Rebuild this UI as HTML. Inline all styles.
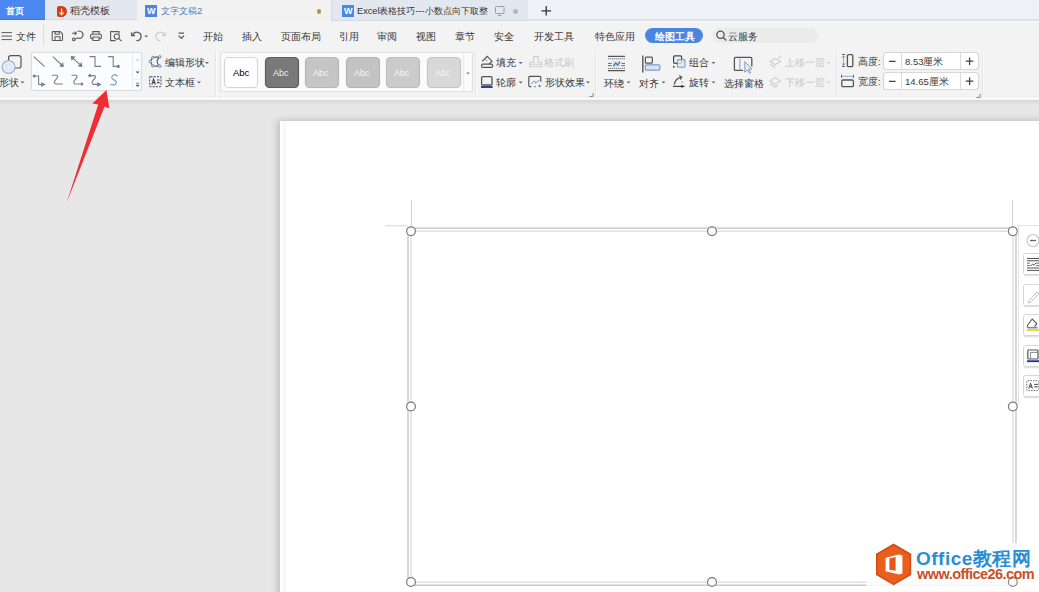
<!DOCTYPE html>
<html><head><meta charset="utf-8">
<style>
*{margin:0;padding:0;box-sizing:border-box}
html,body{width:1039px;height:592px;overflow:hidden;background:#e7e7e7;font-family:"Liberation Sans",sans-serif;color:#333}
.a{position:absolute}
.t{position:absolute;font-size:9.5px;line-height:12px;white-space:nowrap;color:#363636}
svg{position:absolute;overflow:visible}
</style></head><body>
<!-- tab bar -->
<div class="a" style="left:0;top:0;width:1039px;height:22px;background:#f2f2f2"></div>
<div class="a" style="left:528px;top:0;width:511px;height:20px;background:#eef1f5"></div>
<div class="a" style="left:528px;top:19px;width:511px;height:2px;background:#dfe2e7"></div><div class="a" style="left:528px;top:21px;width:511px;height:1px;background:#fafafa"></div>
<div class="a" style="left:0;top:0;width:45px;height:20px;background:#4a88f0;border-bottom:1px solid #4173d0"></div>
<div class="a" style="left:0;top:20px;width:44px;height:2px;background:#eef5fa"></div><div class="t" style="left:6px;top:5px;color:#fff;font-size:9.2px;font-weight:bold">首页</div>
<div class="a" style="left:45px;top:0;width:92px;height:20px;background:#e3e7ef;border-bottom:1px solid #d5d9e0"></div>
<div class="a" style="left:56.5px;top:6px;width:10.5px;height:11px;background:#cf4019;border-radius:2px 5.5px 5.5px 2px"></div><svg width="20" height="20" style="left:56px;top:6px" fill="none"><path d="M5.6 2.6v5.6M3.4 6.4l2.2 2.4 2.2-2.4" stroke="#ffd9b0" stroke-width="1.3"/></svg>
<div class="t" style="left:70px;top:5px;color:#333">稻壳模板</div>
<div class="a" style="left:145px;top:5px;width:12px;height:12px;background:#4a88e4"></div>
<div class="t" style="left:147px;top:5px;color:#fff;font-size:9px;font-weight:bold">W</div>
<div class="t" style="left:161px;top:5px;color:#4a7ac0;font-size:9.4px">文字文稿2</div>
<div class="a" style="left:316.5px;top:9px;width:4.5px;height:4.5px;border-radius:50%;background:#ad9270;box-shadow:0 0 2px 2px #fbf1dc"></div>
<div class="a" style="left:331px;top:0;width:197px;height:21px;background:#e3e7ef;border-left:1px solid #d8dce4;border-bottom:1px solid #d5d9e0"></div>
<div class="a" style="left:342px;top:5px;width:12px;height:12px;background:#4a88e4"></div>
<div class="t" style="left:344px;top:5px;color:#fff;font-size:9px;font-weight:bold">W</div>
<div class="t" style="left:357px;top:5px;color:#333;font-size:9.2px">Excel表格技巧---小数点向下取整</div>
<svg width="20" height="20" style="left:494px;top:4px" fill="none"><rect x="1.5" y="2.5" width="8.5" height="7" rx="1" stroke="#9a9a9a" stroke-width="1"/><path d="M4 11.5h3.5" stroke="#9a9a9a"/></svg><div class="a" style="left:513px;top:9px;width:5px;height:5px;border-radius:50%;background:#b8b8b8"></div>
<svg width="1039" height="22" style="left:0;top:0" fill="none"><path d="M541.4 10.8h9.6M546.2 6v9.6" stroke="#333" stroke-width="1.3"/></svg>

<!-- menu bar -->
<div class="a" style="left:0;top:22px;width:1039px;height:26px;background:#f3f3f3"></div>
<div class="t" style="left:16px;top:31px">文件</div>
<div class="a" style="left:43px;top:25px;width:1px;height:21px;background:#dcdcdc"></div>
<div class="t" style="left:203px;top:31px">开始</div>
<div class="t" style="left:242px;top:31px">插入</div>
<div class="t" style="left:281px;top:31px">页面布局</div>
<div class="t" style="left:339px;top:31px">引用</div>
<div class="t" style="left:377px;top:31px">审阅</div>
<div class="t" style="left:416px;top:31px">视图</div>
<div class="t" style="left:455px;top:31px">章节</div>
<div class="t" style="left:494px;top:31px">安全</div>
<div class="t" style="left:534px;top:31px">开发工具</div>
<div class="t" style="left:595px;top:31px">特色应用</div>
<div class="a" style="left:645px;top:28px;width:58px;height:15px;border-radius:8px;background:#4a85e0"></div>
<div class="t" style="left:655px;top:31px;color:#fff;font-weight:bold">绘图工具</div>
<div class="a" style="left:712px;top:28px;width:106px;height:15px;border-radius:8px;background:#ebebeb"></div>
<div class="t" style="left:728px;top:31px">云服务</div>


<!-- menu icons -->
<svg width="1039" height="110" style="left:0;top:0" fill="none" stroke="#5c5c5c" stroke-width="1.1">
<path d="M1.5 32.6H12M1.5 36.1H12M1.5 39.6H12" stroke-width="1"/>
<path d="M53 31.6h7.2l2.3 2.3v5.8c0 .5-.3.8-.8.8h-8.7c-.5 0-.8-.3-.8-.8v-7.3c0-.5.3-.8.8-.8z"/>
<path d="M55 40.3v-3.6h5v3.6M55.2 31.8v2.4h4v-2.4"/>
<path d="M72 33.3h4.2M74.6 31.7l1.8 1.6-1.8 1.6"/>
<path d="M77.5 31.6a3.6 3.6 0 1 1 0 6.2l-2.6 1.6"/>
<circle cx="73.8" cy="39.4" r="1.3"/>
<path d="M92.8 34.3v-2.7h6.4v2.7M92.6 38.6h-1c-.6 0-1-.4-1-1v-2.3c0-.6.4-1 1-1h8.8c.6 0 1 .4 1 1v2.3c0 .6-.4 1-1 1h-1M93 37v3.5h6V37z"/>
<path d="M119 34.3v-2.7h-8.4v9h5"/>
<circle cx="116.8" cy="36.6" r="2.6"/>
<path d="M118.8 38.6l2.8 2.6"/>
<path d="M132.8 35.2a4.2 4.2 0 1 1 3.6 5.4" stroke-width="1.3"/>
<path d="M131.6 32.3v3.4h3.4" stroke-width="1.3"/>
<path d="M144.2 35.6h4l-2 2z" fill="#666" stroke="none"/>
<path d="M164.2 35.2a4.2 4.2 0 1 0-3.6 5.4M165.4 32.3v3.4h-3.4" stroke="#cfcfcf" stroke-width="1.3"/>
<path d="M178.6 33.2h5.4M178.6 35.6l2.7 2.8 2.7-2.8" stroke-width="1.3"/>
<circle cx="720.5" cy="34.8" r="3.6" stroke="#555" stroke-width="1.3"/>
<path d="M723.2 37.5l3 3" stroke-width="1.4"/>
</svg>

<!-- ribbon -->
<div class="a" style="left:0;top:48px;width:1039px;height:52px;background:#f3f3f3"></div>
<div class="a" style="left:0;top:96px;width:1039px;height:1px;background:#ebebeb"></div><div class="a" style="left:0;top:97px;width:1039px;height:3px;background:#f8f8f8"></div><div class="a" style="left:0;top:100px;width:1039px;height:5px;background:linear-gradient(#d6d6d6,#e7e7e7)"></div>


<!-- ribbon content -->
<svg width="1039" height="110" style="left:0;top:0" fill="none" stroke="#555" stroke-width="1.2">
<!-- shape -->
<rect x="8.6" y="55.6" width="12.4" height="12.4" rx="2.2" stroke="#555" stroke-width="1.2"/>
<circle cx="8.6" cy="67" r="6.4" fill="#e8edf8" stroke="#9fb0d4" stroke-width="1.2"/><circle cx="8.6" cy="67" r="3" fill="none" stroke="#d4ddef" stroke-width="1"/>
<path d="M20.5 81.5h4l-2 2z" fill="#666" stroke="none"/>
<!-- gallery -->
<rect x="31.5" y="52.5" width="110" height="38" rx="2" fill="#fbfcfd" stroke="#dcdcdc"/>
<g stroke="#75818e" stroke-width="1.1" fill="#75818e">
<path d="M33.8 56.6L44.6 66.6" fill="none"/>
<path d="M52.8 56.6L61.8 65" fill="none"/><path d="M63.2 66.4l-3-.5 2.5-2.5z"/>
<path d="M72.6 57.8L80.6 65.2" fill="none"/><path d="M71.4 56.6l3 .5-2.5 2.5zM81.8 66.4l-3-.5 2.5-2.5z"/>
<path d="M89.6 56.6h5.4v9.8h6" fill="none"/>
<path d="M108 56.6h5.2v9.8h4.6" fill="none"/><circle cx="118.3" cy="66.4" r="1"/>
<path d="M35 76h3.6v8.5h4.2" fill="none"/><circle cx="34.2" cy="76" r="1"/><path d="M44.4 84.5l-2.6-1.5v3z"/>
<path d="M52 75.2h4.4c1.4 0 1.6 1.6.8 2.6l-2.4 3c-.9 1.2-.6 2.8 1 3.2h7" fill="none"/>
<path d="M71.4 75.2h4.4c1.4 0 1.6 1.6.8 2.6l-2.4 3c-.9 1.2-.6 2.8 1 3.2h4.8" fill="none"/><circle cx="81.8" cy="84" r="1"/>
<path d="M90.8 75.6h3.4c1.4 0 1.6 1.6.8 2.6l-2.4 3c-.9 1.2-.6 2.8 1 3.2h4.4" fill="none"/><circle cx="89.8" cy="75.6" r="1"/><path d="M100.4 84.5l-2.6-1.5v3z"/>
<path d="M117.4 76.2c-.8-1.4-3.4-2-4.8-.6-1.6 1.4-.8 3.4 1.2 4.2 2 .8 3.2 2.4 2 4-1.2 1.4-3.6 1.2-5.4.4" fill="none" stroke="#6c9ab4"/>
</g>
<path d="M132.5 53v37" stroke="#ececec" stroke-width="1"/>
<path d="M133 69.5h8M133 79.5h8" stroke="#efefef" stroke-width="1"/>
<path d="M135.8 60.6l1.8-2 1.8 2z" fill="#c8c8c8" stroke="none"/>
<path d="M135.6 71.4h4l-2 2.2z" fill="#555" stroke="none"/>
<path d="M136 83.2h3.2" stroke="#777" stroke-width=".9"/><path d="M135.6 84.8h4l-2 2.2z" fill="#555" stroke="none"/>
<!-- edit shape / textbox -->
<path d="M159.8 56.8L152.8 57.4L150.2 61.6L152.8 65.8L159.8 66.2Q154.4 61.6 159.8 56.8Z" stroke="#55637a" stroke-width="1.2"/>
<g fill="#fff" stroke="#6a84b4" stroke-width="1"><circle cx="159.8" cy="56.8" r="1.2"/><circle cx="152.8" cy="57.4" r="1.1"/><circle cx="150.2" cy="61.6" r="1.2"/><circle cx="152.8" cy="65.8" r="1.1"/><circle cx="159.8" cy="66.2" r="1.2"/></g>
<path d="M205 62h4l-2 2z" fill="#666" stroke="none"/>
<rect x="149.6" y="76.6" width="11.4" height="10" rx="1" stroke="#5a6a88" stroke-dasharray="2 1.2"/>
<path d="M151.8 84.6l1.8-5.6 1.8 5.6M152.5 82.6h2.2M157 80h2.6M157 82.6h2.6" stroke="#444" stroke-width="1.1"/>
<path d="M197 81.5h4l-2 2z" fill="#666" stroke="none"/>
<path d="M215.5 51v46" stroke="#e4e4e4"/><path d="M216.5 51v46" stroke="#fafafa"/>
<!-- style gallery -->
<rect x="220.5" y="52.5" width="252" height="39" rx="2" fill="#fbfbfb" stroke="#e0e0e0"/>
<rect x="224.5" y="57.5" width="33" height="30" rx="4" fill="#fff" stroke="#d6d6d6"/>
<rect x="265.5" y="57.5" width="33" height="30" rx="4" fill="#797979" stroke="#5e5e5e"/>
<rect x="305.5" y="57.5" width="33" height="30" rx="4" fill="#c5c5c5" stroke="#b6b6b6"/>
<rect x="346.5" y="57.5" width="33" height="30" rx="4" fill="#c3c3c3" stroke="#b4b4b4"/>
<rect x="386.5" y="57.5" width="33" height="30" rx="4" fill="#cbcbcb" stroke="#bdbdbd"/>
<rect x="427.5" y="57.5" width="33" height="30" rx="4" fill="#d8d8d8" stroke="#c6c6c6"/>
<path d="M463.5 53v38" stroke="#ececec"/>
<path d="M466 72.6h4l-2 2z" fill="#888" stroke="none"/>
<path d="M475.5 51v46" stroke="#e4e4e4"/><path d="M476.5 51v46" stroke="#fafafa"/>
<!-- fill/outline -->
<path d="M482.2 61.4l5-5 4.8 4.8-3 3" stroke="#555" stroke-width="1.2"/>
<path d="M485 58.8l2.4 2.4" stroke="#888" stroke-width="1"/>
<rect x="481.6" y="64.2" width="11" height="3.2" rx="1.2" stroke="#555" stroke-width="1.2"/>
<path d="M518.6 62h4l-2 2z" fill="#666" stroke="none"/>
<path d="M529.8 66.8v-4.6h3.8v-5.6h4.6v5.6h3.6v4.6zM530.2 64.2h11.2" stroke="#cdcdcd" stroke-width="1.1"/>
<rect x="481.6" y="76.6" width="10.4" height="8.4" rx="1" stroke="#555" stroke-width="1.3"/>
<path d="M481 87h11.6" stroke="#1a2a8a" stroke-width="1.8"/>
<path d="M518.6 81.5h4l-2 2z" fill="#666" stroke="none"/>
<path d="M531.4 86.6h-1.6c-.6 0-1-.4-1-1v-8.2c0-.6.4-1 1-1h10c.6 0 1 .4 1 1v4.4" stroke="#555" stroke-width="1.2"/>
<path d="M531.6 83.6l2.6-2.4 1.8 1.8 3-2.8" stroke="#6a86b8" stroke-width="1.1" stroke-dasharray="1.5 .8"/>
<circle cx="539.6" cy="86" r="1.2" fill="#6a86b8" stroke="none"/><circle cx="535" cy="86.6" r=".9" fill="#6a86b8" stroke="none"/>
<path d="M586 81.5h4l-2 2z" fill="#666" stroke="none"/>
<path d="M589.5 96.5h3.5v-3.5" stroke="#888" stroke-width="1"/>
<path d="M595.5 51v46" stroke="#e4e4e4"/><path d="M596.5 51v46" stroke="#fafafa"/>
<!-- wrap / align / group / rotate -->
<path d="M608 56.4h17M608 70.6h17" stroke="#555" stroke-width="1.2"/><path d="M608 58.8h17M608 68.4h17" stroke="#7a7a7a" stroke-width="1" stroke-dasharray="1.4 .6"/>
<path d="M608 63.4h3.6M621.4 63.4h3.6M608 65.6h3.6M621.4 65.6h3.6" stroke="#666" stroke-width="1"/>
<rect x="612.6" y="60.8" width="8" height="6.4" fill="#d6e4f4" stroke="none"/>
<path d="M613.4 66.4l2.4-3.4 1.8 2 2.4-3.4" stroke="#3a6a8a" stroke-width="1.1"/>
<path d="M626.5 81.5h4l-2 2z" fill="#666" stroke="none"/>
<path d="M642.8 55.6v16.8" stroke="#555" stroke-width="1.4"/>
<rect x="645.4" y="57.2" width="7" height="6" rx="1" stroke="#555" stroke-width="1.2"/>
<rect x="645.4" y="64.8" width="14.4" height="5.4" rx="1" fill="#d8e4f4" stroke="#7a9ccc" stroke-width="1.2"/>
<path d="M661.5 81.5h4l-2 2z" fill="#666" stroke="none"/>
<rect x="673.6" y="55.8" width="8" height="7.6" rx="1.2" stroke="#444" stroke-width="1.2"/>
<rect x="677.4" y="59.6" width="7.6" height="7.6" rx="1" fill="#dde7f5" stroke="#7d9acb" stroke-width="1.1" fill-opacity=".8"/>
<circle cx="673.8" cy="66.8" r=".9" fill="#333" stroke="none"/>
<path d="M711.5 62h4l-2 2z" fill="#666" stroke="none"/>
<path d="M674.4 84.6c.4-3.6 2.8-6.4 6.6-7.2" stroke="#555" stroke-width="1.2"/>
<path d="M679.2 75.4l2.6 1.8-1.6 2.6" stroke="#555" stroke-width="1.1"/>
<path d="M682.2 81v2" stroke="#999" stroke-width="1"/>
<path d="M673 86.4h11.6" stroke="#444" stroke-width="1.2"/><circle cx="682" cy="86.4" r="1.2" fill="#333" stroke="none"/>
<path d="M711.5 81.5h4l-2 2z" fill="#666" stroke="none"/>
<!-- selection pane -->
<path d="M743 70.4h-7.6c-.6 0-1-.4-1-1V58.4c0-.6.4-1 1-1h15.4c.6 0 1 .4 1 1v8" stroke="#555" stroke-width="1.3"/>
<path d="M739.8 58.4v11.2" stroke="#aabbd8" stroke-width="1.6"/>
<path d="M744.8 61.6v10.6l2.4-2.2 2.4 3.4 1.2-.8-2.2-3.2 3.2-.4z" fill="#e2eaf7" stroke="#7c9ccf" stroke-width="1"/>
<!-- bring forward / send backward (disabled) -->
<path d="M770 61.6l5.2-3.2 5.2 3.2-5.2 3.2zM770 64.4l5.2 3.2" stroke="#cfcfcf" stroke-width="1.2"/>
<path d="M778.4 58.2l3-2.6" stroke="#cfcfcf"/>
<path d="M826.5 62h4l-2 2z" fill="#cfcfcf" stroke="none"/>
<path d="M770 81l5.2-3.2 5.2 3.2-5.2 3.2zM770 83.8l5.2 3.2 3-1.8" stroke="#cfcfcf" stroke-width="1.2"/>
<path d="M826.5 81.5h4l-2 2z" fill="#cfcfcf" stroke="none"/>
<path d="M836.5 51v46" stroke="#e4e4e4"/><path d="M837.5 51v46" stroke="#fafafa"/>
<!-- size -->
<path d="M842 54.6h3M842 66.4h3" stroke="#555" stroke-width="1"/><path d="M843.5 56v9" stroke="#6a90c8" stroke-width="1" stroke-dasharray="1.5 .7"/>
<path d="M842.2 57.6l1.3-1.6 1.3 1.6M842.2 63.6l1.3 1.6 1.3-1.6" stroke="#5a7eb8" stroke-width="1"/>
<rect x="847.4" y="54.6" width="5.4" height="12" rx="1.2" stroke="#555" stroke-width="1.3"/>
<path d="M841.6 74.8v3M853.4 74.8v3" stroke="#555" stroke-width="1"/><path d="M842.6 76.3h10" stroke="#6a90c8" stroke-width="1" stroke-dasharray="1.5 .7"/>
<rect x="841.8" y="80" width="11.6" height="6.6" rx="1.2" stroke="#555" stroke-width="1.3"/>
<rect x="883.5" y="52.5" width="95" height="17" rx="3" fill="#fff" stroke="#d8d8d8"/>
<rect x="883.5" y="72.5" width="95" height="17" rx="3" fill="#fff" stroke="#d8d8d8"/>
<path d="M901.5 53v16M960.5 53v16M901.5 73v16M960.5 73v16" stroke="#dcdcdc"/>
<path d="M889 61.4h6.6M889 81.4h6.6" stroke="#444" stroke-width="1.3"/>
<path d="M965.8 61.2h7.6M969.6 57.4v7.6M965.8 81.2h7.6M969.6 77.4v7.6" stroke="#444" stroke-width="1.3"/>
<path d="M976.5 97.5h3.5V94" stroke="#888" stroke-width="1"/>
<path d="M982.5 51v46" stroke="#e4e4e4"/><path d="M983.5 51v46" stroke="#fafafa"/>
</svg>
<div class="t" style="left:-1px;top:77px">形状</div>
<div class="t" style="left:165px;top:57px">编辑形状</div>
<div class="t" style="left:165px;top:77px">文本框</div>
<div class="t" style="left:233px;top:67px;color:#000;font-size:9.5px">Abc</div>
<div class="t" style="left:273px;top:67px;color:#f0f0f0;font-size:9px">Abc</div>
<div class="t" style="left:313px;top:67px;color:#f6f6f6;font-size:9px">Abc</div>
<div class="t" style="left:354px;top:67px;color:#f6f6f6;font-size:9px">Abc</div>
<div class="t" style="left:394px;top:67px;color:#f6f6f6;font-size:9px">Abc</div>
<div class="t" style="left:435px;top:67px;color:#f6f6f6;font-size:9px">Abc</div>
<div class="t" style="left:496px;top:57px">填充</div>
<div class="t" style="left:544px;top:57px;color:#c4c4c4">格式刷</div>
<div class="t" style="left:496px;top:77px">轮廓</div>
<div class="t" style="left:545px;top:77px">形状效果</div>
<div class="t" style="left:604px;top:78px">环绕</div>
<div class="t" style="left:639px;top:78px">对齐</div>
<div class="t" style="left:689px;top:57px">组合</div>
<div class="t" style="left:689px;top:77px">旋转</div>
<div class="t" style="left:724px;top:78px">选择窗格</div>
<div class="t" style="left:785px;top:57px;color:#c6c6c6">上移一层</div>
<div class="t" style="left:785px;top:77px;color:#c6c6c6">下移一层</div>
<div class="t" style="left:858px;top:56px">高度:</div>
<div class="t" style="left:858px;top:76px">宽度:</div>
<div class="t" style="left:905px;top:56px">8.53厘米</div>
<div class="t" style="left:905px;top:76px">14.65厘米</div>

<!-- page -->
<div class="a" style="left:280px;top:121px;width:770px;height:480px;background:#fff;box-shadow:-3px -1px 7px rgba(0,0,0,0.17)"></div><div class="a" style="left:283px;top:121px;width:3px;height:480px;background:#f8f8f8"></div>


<!-- selection -->
<svg width="1039" height="592" style="left:0;top:0" fill="none">
<path d="M411.5 200v26M385 225.8h23" stroke="#d4d4d4" stroke-width="1"/>
<path d="M1012.5 200v26" stroke="#d4d4d4" stroke-width="1"/>
<rect x="408" y="228.2" width="608" height="357" stroke="#c4c4c4" stroke-width="1.3"/>
<rect x="411" y="231.2" width="602" height="351" stroke="#dcdcdc" stroke-width="1.3"/>
<g fill="#fff" stroke="#7a7a7a" stroke-width="1.2">
<circle cx="411" cy="231.2" r="4.4"/><circle cx="712" cy="231.2" r="4.4"/><circle cx="1012.8" cy="231.2" r="4.4"/>
<circle cx="411" cy="406.5" r="4.4"/><circle cx="1012.8" cy="406.5" r="4.4"/>
<circle cx="411" cy="582" r="4.4"/><circle cx="712" cy="582" r="4.4"/>
</g>
</svg>
<!-- right float toolbar -->
<div class="a" style="left:1018px;top:225px;width:30px;height:180px;background:#fff;border-left:1px solid #e4e4e4;border-top:1px solid #e4e4e4"></div>
<svg width="1039" height="592" style="left:0;top:0" fill="none">
<circle cx="1033" cy="240.5" r="6" fill="#fff" stroke="#c8c8c8" stroke-width="1.1"/>
<path d="M1030 240.5h6" stroke="#666" stroke-width="1.3"/>
<g fill="none" stroke="#e2e2e2" stroke-width="1.5"><path d="M1024 275.6h16M1024 306.6h16M1024 336.6h16M1024 367.6h16M1024 397.6h16"/></g>
<g fill="#fff" stroke="#d6d6d6" stroke-width="1">
<rect x="1023.5" y="253.5" width="24" height="21" rx="2"/>
<rect x="1023.5" y="284.5" width="24" height="21" rx="2"/>
<rect x="1023.5" y="314.5" width="24" height="21" rx="2"/>
<rect x="1023.5" y="345.5" width="24" height="21" rx="2"/>
<rect x="1023.5" y="375.5" width="24" height="21" rx="2"/>
</g>
<path d="M1027 258.5h12M1027 260.8h12M1027 268h12M1027 270.4h12" stroke="#555" stroke-width="1"/>
<path d="M1027 263.2h3M1027 265.6h3M1036 263.2h3M1036 265.6h3" stroke="#666" stroke-width=".9"/>
<path d="M1030.6 266l2-2 1.4 1.2 2-2.2" stroke="#3a5a9a" stroke-width="1"/>
<path d="M1029 300.6l8-8.6 1.8 1.8-8 8.4-2.4.6z" stroke="#bdbdbd" stroke-width="1"/>
<path d="M1027.6 325l4.6-6 4.6 4.6-2.2 3" stroke="#555" stroke-width="1.1"/>
<path d="M1026.8 330h12" stroke="#e6d84a" stroke-width="2.2"/>
<path d="M1027.6 325v2.8h10" stroke="#555" stroke-width="1"/>
<rect x="1027.8" y="350" width="10.2" height="9" rx=".8" stroke="#555" stroke-width="1.2"/>
<path d="M1030.4 352.4v6.6M1030.4 352.4h7.6" stroke="#888" stroke-width="1"/>
<path d="M1027 361.2h12" stroke="#1a2aa0" stroke-width="1.8"/>
<rect x="1026.8" y="380.6" width="12" height="10" rx="1" stroke="#777" stroke-width="1" stroke-dasharray="1.6 1"/>
<path d="M1028.8 388.6l1.8-5.4 1.8 5.4M1029.4 386.8h2.4M1034.2 384.4h3.6M1034.2 386.8h3.6" stroke="#444" stroke-width="1"/>
</svg>
<!-- logo -->
<div class="a" style="left:866px;top:543px;width:173px;height:49px;background:rgba(255,255,255,0.8)"></div>
<svg width="1039" height="592" style="left:0;top:0">
<circle cx="1012.8" cy="582" r="4.4" fill="none" stroke="#8a8a8a" stroke-width="1.2"/>
<path d="M893.6 543.6L911.2 553.8V575L893.6 585.2L876 575V553.8Z" fill="#d24c18"/>
<path d="M893.6 545.4L909.6 554.7V574.1L893.6 583.4L877.6 574.1V554.7Z" fill="#ec5e1e"/>
<path d="M885.6 557.8L899 554.4l3.4 1v18.2L899 574.6l-13.4-3.4z" fill="#fff"/>
<path d="M889.4 558.4l6.2-1.4v13.8l-6.2-1z" fill="#e5561a"/>
</svg>
<div class="t" style="left:916px;top:547px;font-size:19px;line-height:24px;font-weight:bold;color:#2a8dd4;letter-spacing:0.5px">Office教程网</div>
<div class="t" style="left:917px;top:566px;font-size:14.5px;line-height:16px;font-weight:bold;color:#c9502a;letter-spacing:-0.55px">www.office26.com</div>
<!-- red arrow -->
<svg width="1039" height="592" style="left:0;top:0">
<path d="M106.4 90L109.4 108.4L104.6 106.6L66.6 202.8L98.2 104.6L92.4 103.4Z" fill="#ee2e36"/>
</svg>

</body></html>
